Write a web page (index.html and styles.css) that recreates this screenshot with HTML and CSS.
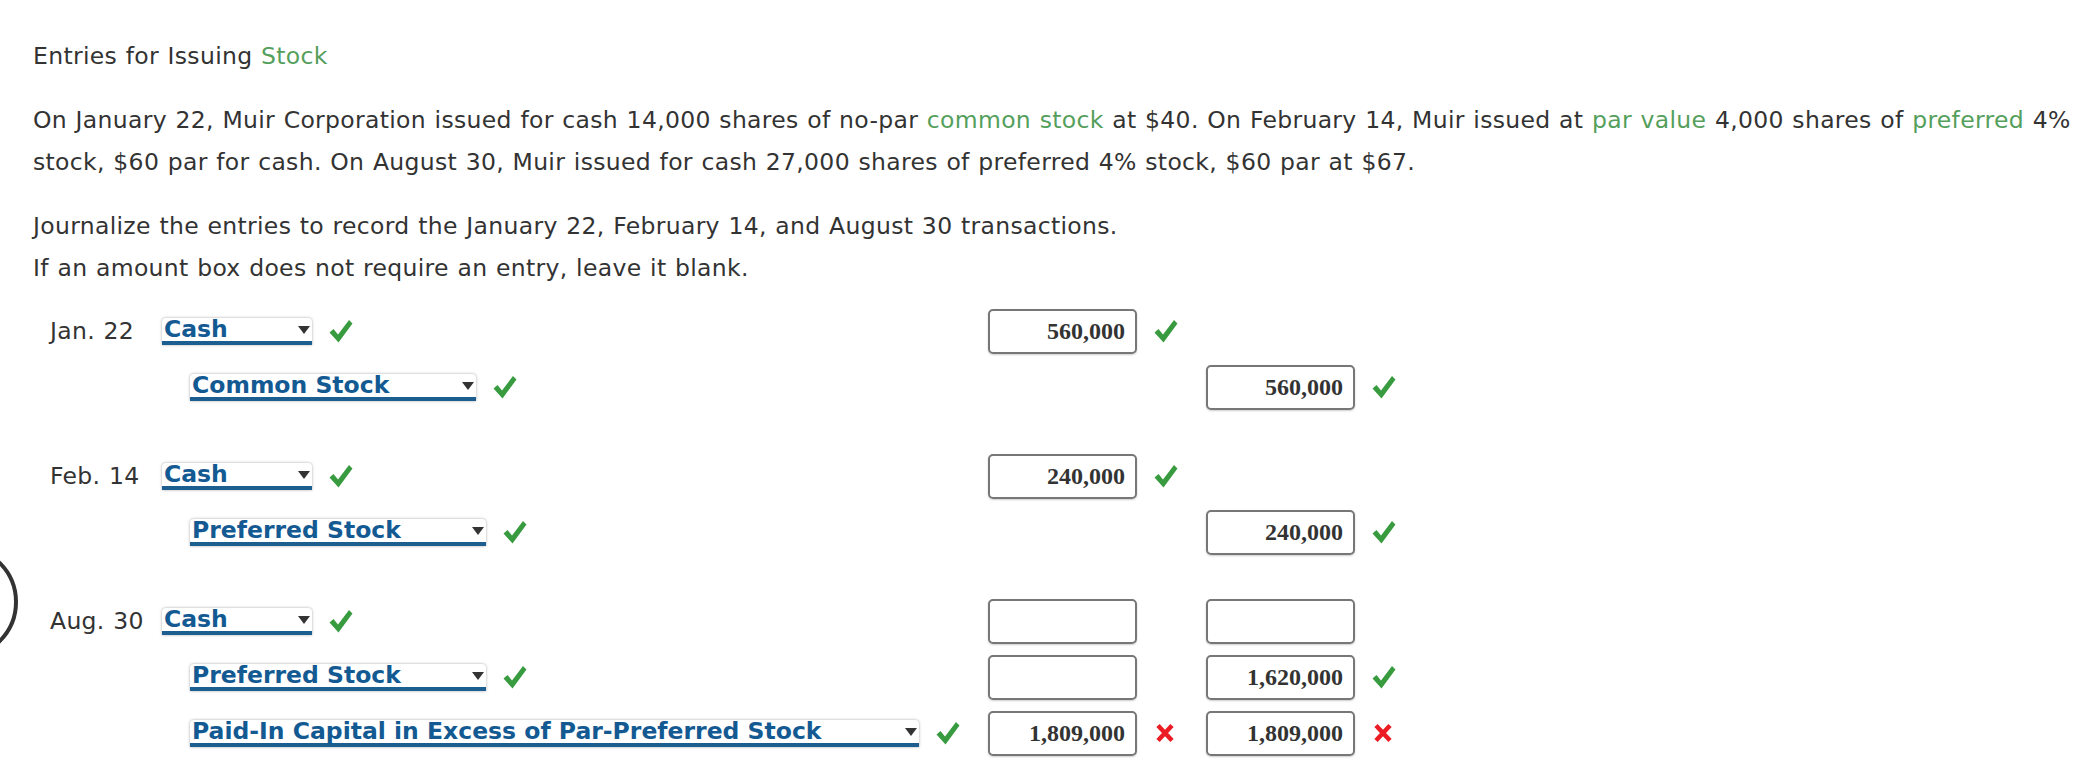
FILE: index.html
```html
<!DOCTYPE html>
<html lang="en">
<head>
  <meta charset="UTF-8">
  <title>Entries for Issuing Stock</title>
  <link rel="stylesheet" href="styles.css">
</head>
<body>

  <div class="ring"></div>

  <div class="page">
    <p class="title">Entries for Issuing <span class="term">Stock</span></p>

    <p>On January 22, Muir Corporation issued for cash 14,000 shares of no-par <span class="term">common stock</span> at $40. On February 14, Muir issued at <span class="term">par value</span> 4,000 shares of <span class="term">preferred</span> 4% stock, $60 par for cash. On August 30, Muir issued for cash 27,000 shares of preferred 4% stock, $60 par at $67.</p>

    <p class="instr">Journalize the entries to record the January 22, February 14, and August 30 transactions.<br>If an amount box does not require an entry, leave it blank.</p>

    <div class="journal">

      <!-- Jan. 22 -->
      <div class="entry">
        <div class="line">
          <div class="acct">
            <span class="date">Jan. 22</span>
            <span class="select w-cash">Cash<i class="arrow"></i></span>
            <svg class="mark ok" viewBox="0 0 24 25"><path d="M0.5 13.5 L4.5 10 L9 15.5 L20 1 L23.5 4.5 L9.5 23.5 Z"/></svg>
          </div>
          <div class="amt"><span class="box">560,000</span><svg class="mark ok" viewBox="0 0 24 25"><path d="M0.5 13.5 L4.5 10 L9 15.5 L20 1 L23.5 4.5 L9.5 23.5 Z"/></svg></div>
          <div class="amt"></div>
        </div>
        <div class="line">
          <div class="acct credit">
            <span class="select w-common">Common Stock<i class="arrow"></i></span>
            <svg class="mark ok" viewBox="0 0 24 25"><path d="M0.5 13.5 L4.5 10 L9 15.5 L20 1 L23.5 4.5 L9.5 23.5 Z"/></svg>
          </div>
          <div class="amt"></div>
          <div class="amt"><span class="box">560,000</span><svg class="mark ok" viewBox="0 0 24 25"><path d="M0.5 13.5 L4.5 10 L9 15.5 L20 1 L23.5 4.5 L9.5 23.5 Z"/></svg></div>
        </div>
      </div>

      <!-- Feb. 14 -->
      <div class="entry">
        <div class="line">
          <div class="acct">
            <span class="date">Feb. 14</span>
            <span class="select w-cash">Cash<i class="arrow"></i></span>
            <svg class="mark ok" viewBox="0 0 24 25"><path d="M0.5 13.5 L4.5 10 L9 15.5 L20 1 L23.5 4.5 L9.5 23.5 Z"/></svg>
          </div>
          <div class="amt"><span class="box">240,000</span><svg class="mark ok" viewBox="0 0 24 25"><path d="M0.5 13.5 L4.5 10 L9 15.5 L20 1 L23.5 4.5 L9.5 23.5 Z"/></svg></div>
          <div class="amt"></div>
        </div>
        <div class="line">
          <div class="acct credit">
            <span class="select w-pref">Preferred Stock<i class="arrow"></i></span>
            <svg class="mark ok" viewBox="0 0 24 25"><path d="M0.5 13.5 L4.5 10 L9 15.5 L20 1 L23.5 4.5 L9.5 23.5 Z"/></svg>
          </div>
          <div class="amt"></div>
          <div class="amt"><span class="box">240,000</span><svg class="mark ok" viewBox="0 0 24 25"><path d="M0.5 13.5 L4.5 10 L9 15.5 L20 1 L23.5 4.5 L9.5 23.5 Z"/></svg></div>
        </div>
      </div>

      <!-- Aug. 30 -->
      <div class="entry">
        <div class="line">
          <div class="acct">
            <span class="date">Aug. 30</span>
            <span class="select w-cash">Cash<i class="arrow"></i></span>
            <svg class="mark ok" viewBox="0 0 24 25"><path d="M0.5 13.5 L4.5 10 L9 15.5 L20 1 L23.5 4.5 L9.5 23.5 Z"/></svg>
          </div>
          <div class="amt"><span class="box"></span></div>
          <div class="amt"><span class="box"></span></div>
        </div>
        <div class="line">
          <div class="acct credit">
            <span class="select w-pref">Preferred Stock<i class="arrow"></i></span>
            <svg class="mark ok" viewBox="0 0 24 25"><path d="M0.5 13.5 L4.5 10 L9 15.5 L20 1 L23.5 4.5 L9.5 23.5 Z"/></svg>
          </div>
          <div class="amt"><span class="box"></span></div>
          <div class="amt"><span class="box">1,620,000</span><svg class="mark ok" viewBox="0 0 24 25"><path d="M0.5 13.5 L4.5 10 L9 15.5 L20 1 L23.5 4.5 L9.5 23.5 Z"/></svg></div>
        </div>
        <div class="line">
          <div class="acct credit">
            <span class="select w-apic">Paid-In Capital in Excess of Par-Preferred Stock<i class="arrow"></i></span>
            <svg class="mark ok" viewBox="0 0 24 25"><path d="M0.5 13.5 L4.5 10 L9 15.5 L20 1 L23.5 4.5 L9.5 23.5 Z"/></svg>
          </div>
          <div class="amt"><span class="box">1,809,000</span><svg class="mark bad" viewBox="0 0 20 20"><path d="M3 2.5 L17 17.5 M17 2.5 L3 17.5"/></svg></div>
          <div class="amt"><span class="box">1,809,000</span><svg class="mark bad" viewBox="0 0 20 20"><path d="M3 2.5 L17 17.5 M17 2.5 L3 17.5"/></svg></div>
        </div>
      </div>

    </div>
  </div>

</body>
</html>
```

FILE: styles.css
```css
body {
  margin: 0;
  font-family: 'DejaVu Sans', Verdana, sans-serif;
  font-size: 23.5px;
  line-height: 42px;
  letter-spacing: 0.32px;
  word-spacing: 0.8px;
  color: #333;
  background: #fff;
  overflow: hidden;
}

.page {
  padding: 35px 8px 0 33px;
}

p {
  margin: 0 0 22px;
}

p.instr {
  margin-bottom: 14px;
}

.term {
  color: #559f5d;
}

/* journal table */
.journal {
  padding-left: 17px;
}

.entry {
  margin-bottom: 33px;
}

.line {
  display: grid;
  grid-template-columns: 938px 218px 218px;
  height: 56px;
  align-items: center;
}

.acct {
  display: flex;
  align-items: center;
}

.acct.credit {
  padding-left: 140px;
}

.date {
  width: 112px;
}

.select {
  display: flex;
  align-items: center;
  justify-content: space-between;
  box-sizing: border-box;
  height: 27px;
  padding: 0 2px;
  background: #fff;
  border-bottom: 4px solid #1b5e8f;
  border-radius: 4px 4px 0 0;
  box-shadow: 0 0 3px rgba(0, 0, 0, 0.35);
  color: #135a93;
  font-weight: bold;
  line-height: 23px;
  letter-spacing: 0;
  word-spacing: 0;
  white-space: nowrap;
}

.w-cash { width: 150px; }
.w-common { width: 286px; }
.w-pref { width: 296px; }
.w-apic { width: 729px; }

.arrow {
  flex: none;
  width: 0;
  height: 0;
  border-left: 6px solid transparent;
  border-right: 6px solid transparent;
  border-top: 8px solid #333;
  margin: 1px 0 0 4px;
}

.mark {
  flex: none;
  width: 24px;
  height: 25px;
  margin-left: 17px;
}

.mark.ok path {
  fill: #399b3f;
}

.mark.bad {
  width: 20px;
  height: 20px;
  margin-left: 18px;
}

.mark.bad path {
  fill: none;
  stroke: #ec1c24;
  stroke-width: 4.5;
}

.amt {
  display: flex;
  align-items: center;
}

.box {
  box-sizing: border-box;
  width: 149px;
  height: 45px;
  padding-right: 10px;
  border: 2px solid #777;
  border-radius: 5px;
  box-shadow: 0 1px 2px rgba(0, 0, 0, 0.2);
  font-family: 'Liberation Serif', 'Times New Roman', serif;
  font-weight: bold;
  font-size: 24px;
  line-height: 41px;
  letter-spacing: 0;
  word-spacing: 0;
  text-align: right;
  color: #333;
}

/* partial ring at the left edge */
.ring {
  position: absolute;
  left: -96px;
  top: 545px;
  width: 106px;
  height: 106px;
  border: 4px solid #333;
  border-radius: 50%;
}
```
